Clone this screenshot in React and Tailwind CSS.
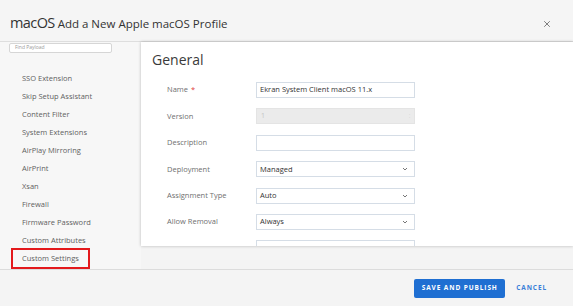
import { X } from 'lucide-react';

const payloads = [
  'SSO Extension',
  'Skip Setup Assistant',
  'Content Filter',
  'System Extensions',
  'AirPlay Mirroring',
  'AirPrint',
  'Xsan',
  'Firewall',
  'Firmware Password',
  'Custom Attributes',
];

function Chevron() {
  return (
    <svg width="6" height="4" viewBox="0 0 6 4" className="text-[#777]">
      <path d="M1 1l2 2 2-2" fill="none" stroke="currentColor" strokeWidth="1" />
    </svg>
  );
}

function Row({ label, required, children }) {
  return (
    <div className="flex items-center h-[16px]">
      <div className="w-[115px] pl-[26px] text-[7.5px] text-[#6f6f6f]">
        {label}
        {required && <span className="text-[#e03a3a] ml-[3px]">*</span>}
      </div>
      {children}
    </div>
  );
}

function Select({ value }) {
  return (
    <div className="w-[159px] h-[16px] border border-[#d5dde6] bg-white flex items-center justify-between px-[3px] pr-[6px] text-[7.5px] text-[#333]">
      <span>{value}</span>
      <Chevron />
    </div>
  );
}

function Field({ value, className = '' }) {
  return (
    <div className={`w-[159px] h-[16px] border border-[#d5dde6] bg-white flex items-center px-[3px] text-[7.5px] text-[#333] ${className}`}>
      {value}
    </div>
  );
}

export default function App() {
  return (
    <div className="w-[573px] h-[306px] bg-[#f4f4f4] flex flex-col font-['Open_Sans',sans-serif] overflow-hidden">
      <header className="h-[42px] shrink-0 flex items-center justify-between pl-[10px] pr-[21px] pt-[4px] border-b border-[#dedede] bg-[#f5f5f5]">
        <div className="flex items-baseline gap-[3px] text-[#333]">
          <span className="text-[14.5px] tracking-[-0.6px]">macOS</span>
          <span className="text-[11.5px]">Add a New Apple macOS Profile</span>
        </div>
        <X size={10} strokeWidth={1.8} className="text-[#555] mt-[3px]" />
      </header>

      <div className="flex-1 flex min-h-0 border-b border-[#dcdcdc]">
        <aside className="w-[141px] shrink-0 flex flex-col bg-[#f7f7f7]">
          <div className="mt-[1px] ml-[9px] w-[103px] h-[10px] bg-white border border-[#d6d6d6] rounded-[2px] flex items-center px-[5px] text-[5px] text-[#999]">
            Find Payload
          </div>
          <ul className="mt-[17px] flex flex-col text-[7.5px] text-[#5f5f5f]">
            {payloads.map((p) => (
              <li key={p} className="h-[18px] flex items-center pl-[22px]">
                {p}
              </li>
            ))}
            <li className="-mt-[2px] ml-[11px] w-[79px] h-[21px] border-2 border-[#e3191c] flex items-center pl-[9px]">
              Custom Settings
            </li>
          </ul>
        </aside>

        <section className="flex-1 mb-[23px] bg-white shadow-[0_0_3px_rgba(0,0,0,0.25)] overflow-hidden">
          <h2 className="pl-[11px] pt-[8px] text-[14px] text-[#3a3a3a] leading-[20px]">General</h2>
          <div className="mt-[12px] flex flex-col gap-[10.4px]">
            <Row label="Name" required>
              <Field value="Ekran System Client macOS 11.x" />
            </Row>
            <Row label="Version">
              <div className="w-[159px] h-[16px] border border-[#e4e4e4] bg-[#ebebeb] flex items-center justify-between px-[4px] text-[7px] text-[#c4c4c4]">
                <span>1</span>
                <span className="text-[5px] leading-[4px] flex flex-col">
                  <span>⁚</span>
                </span>
              </div>
            </Row>
            <Row label="Description">
              <Field value="" />
            </Row>
            <Row label="Deployment">
              <Select value="Managed" />
            </Row>
            <Row label="Assignment Type">
              <Select value="Auto" />
            </Row>
            <Row label="Allow Removal">
              <Select value="Always" />
            </Row>
            <Row label="Managed By">
              <Field value="Administrator" className="text-[#888]" />
            </Row>
          </div>
        </section>
      </div>

      <footer className="h-[36px] shrink-0 flex items-center justify-end pr-[26px] gap-[11px]">
        <button className="w-[91px] h-[19px] rounded-[2px] bg-[#1f6fd2] text-white text-[6.5px] font-bold tracking-[0.9px]">
          SAVE AND PUBLISH
        </button>
        <button className="text-[#3a7fd8] text-[6.5px] font-bold tracking-[0.9px]">CANCEL</button>
      </footer>
    </div>
  );
}
